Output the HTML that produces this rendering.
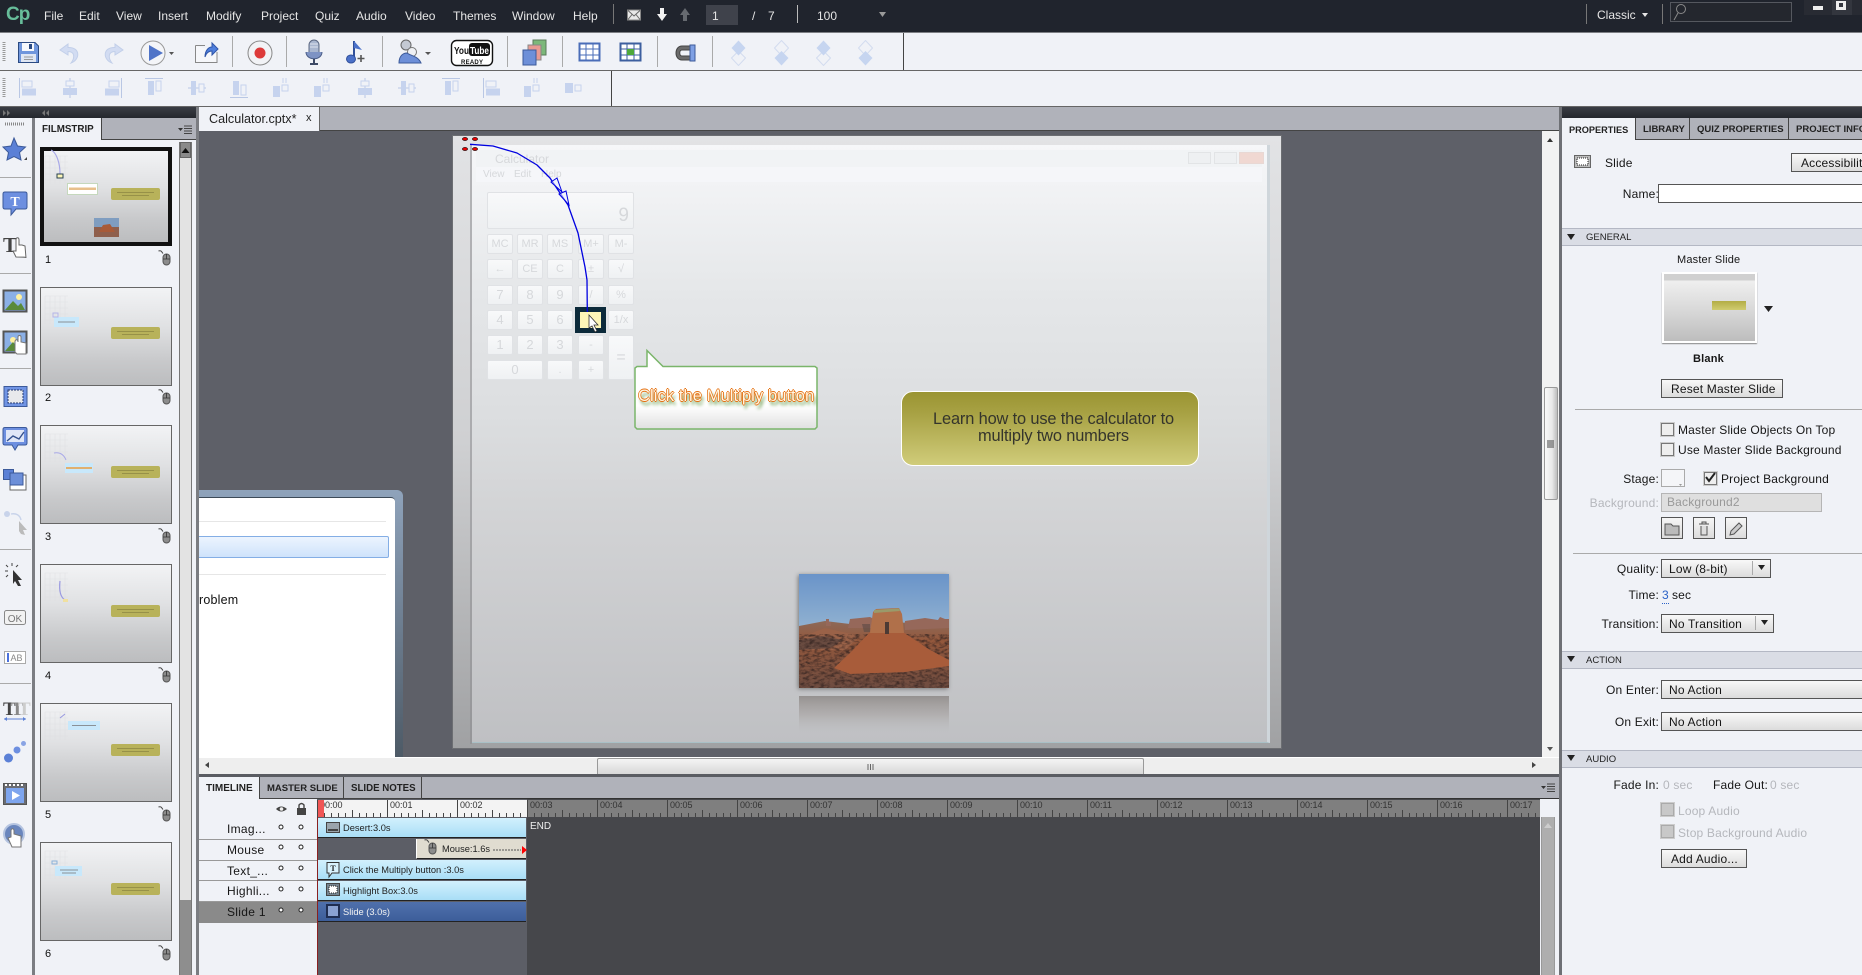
<!DOCTYPE html>
<html><head><meta charset="utf-8"><title>Captivate</title>
<style>
html,body{margin:0;padding:0;width:1862px;height:975px;overflow:hidden;background:#f0f2f7;font-family:"Liberation Sans",sans-serif;font-size:12px;color:#111}
.a{position:absolute;box-sizing:border-box}
.t{position:absolute;white-space:nowrap;line-height:14px;height:14px}
.m{color:#e6e6e6;top:9px;font-size:12px}
.tab{position:absolute;box-sizing:border-box;background:#b0b2ba;border-right:1px solid #444;border-bottom:1px solid #444;font-size:9.5px;font-weight:bold;color:#222;padding-left:7px;white-space:nowrap;line-height:24px;height:22px;overflow:hidden}
.tab.on{background:#f0f2f7;border-bottom:none}
.lb{position:absolute;white-space:nowrap;line-height:14px;height:14px;margin-top:1px;right:203px;text-align:right;letter-spacing:.18px;color:#161616}
.p{position:absolute;white-space:nowrap;line-height:14px;height:14px;margin-top:1px;letter-spacing:.18px;color:#161616}
.btn{position:absolute;box-sizing:border-box;border:1px solid #555;background:linear-gradient(#f8f8f8,#dcdcdc);height:19px;line-height:18px;letter-spacing:.18px;white-space:nowrap;color:#161616}
.hd{position:absolute;left:1562px;width:300px;height:18px;box-sizing:border-box;background:#dadde5;border-top:1px solid #b4b8c4;border-bottom:1px solid #b4b8c4;font-size:9.5px;line-height:18px;padding-left:24px;color:#222}
.cb{position:absolute;box-sizing:border-box;width:13px;height:13px;background:#eee;border:1px solid #777;box-shadow:0 0 0 1px #ccc}
.ck{position:absolute;box-sizing:border-box;background:linear-gradient(#f8f9fa,#eff1f3);border:1px solid #e0e2e5;border-radius:2px;color:#d6d8db;text-align:center;line-height:18px;font-size:11px}
.tr{position:absolute;left:318px;width:208px;height:20px;box-sizing:border-box;background:linear-gradient(#d2f0fd,#a9def6);border-bottom:1px solid #222;font-size:9.3px;line-height:21px;padding-left:25px;color:#222;white-space:nowrap}
.tl{position:absolute;left:227px;font-size:12px;line-height:16px;letter-spacing:.3px;color:#161616}
.rl{position:absolute;top:800px;font-size:9px;line-height:11px;color:#333}
.thn{position:absolute;left:45px;font-size:11px;line-height:12px;color:#111}
.fr{position:absolute;left:40px;width:132px;height:99px;box-sizing:border-box;border:1.5px solid #666;background:linear-gradient(#f2f3f5,#e0e1e3 40%,#c8c9cb 75%,#bcbdbf)}
</style></head><body>

<!-- menu bar -->
<div class="a" style="left:0;top:0;width:1862px;height:33px;background:#20242d;border-bottom:1px solid #7d7f84"></div>
<div class="t" style="left:6px;top:4px;font-size:19px;height:24px;line-height:22px;font-weight:bold;color:#67bd9a;letter-spacing:-1px">Cp</div>
<div class="t m" style="left:44px">File</div><div class="t m" style="left:79px">Edit</div><div class="t m" style="left:116px">View</div><div class="t m" style="left:158px">Insert</div><div class="t m" style="left:206px">Modify</div><div class="t m" style="left:261px">Project</div><div class="t m" style="left:315px">Quiz</div><div class="t m" style="left:356px">Audio</div><div class="t m" style="left:405px">Video</div><div class="t m" style="left:453px">Themes</div><div class="t m" style="left:512px">Window</div><div class="t m" style="left:573px">Help</div>
<div class="a" style="left:613px;top:4px;width:1px;height:20px;background:#777"></div>
<div class="a" style="left:706px;top:5px;width:32px;height:20px;background:#3f424b"></div>
<div class="t m" style="left:712px">1</div><div class="t m" style="left:752px">/</div><div class="t m" style="left:768px">7</div>
<div class="a" style="left:797px;top:5px;width:1px;height:18px;background:#bbb"></div>
<div class="t m" style="left:817px">100</div>
<div class="a" style="left:1586px;top:4px;width:1px;height:20px;background:#777"></div>
<div class="t m" style="left:1597px;top:8px">Classic</div>
<div class="a" style="left:1662px;top:4px;width:1px;height:20px;background:#777"></div>
<div class="a" style="left:1670px;top:2px;width:122px;height:20px;border:1px solid #55585f;background:#24272e"></div>

<!-- toolbars -->
<div class="a" style="left:0;top:33px;width:1862px;height:37px;background:#f0f2f7"></div>
<div class="a" style="left:0;top:70px;width:1862px;height:1px;background:#666"></div>
<div class="a" style="left:903px;top:33px;width:1px;height:37px;background:#444"></div>
<div class="a" style="left:0;top:71px;width:1862px;height:35px;background:#f0f2f7"></div>
<div class="a" style="left:611px;top:71px;width:1px;height:36px;background:#444"></div>
<div class="a" style="left:0;top:106px;width:1862px;height:1px;background:#666"></div>

<!-- left tool + film panel -->
<div class="a" style="left:0;top:107px;width:199px;height:11px;background:linear-gradient(#3a3d44,#24272d)"></div>
<div class="a" style="left:0;top:118px;width:32px;height:857px;background:#f0f2f7"></div>
<div class="a" style="left:32px;top:118px;width:3px;height:857px;background:#7b7d82"></div>
<div class="a" style="left:35px;top:118px;width:161px;height:857px;background:#f0f2f7"></div>
<div class="a" style="left:101px;top:118px;width:95px;height:22px;background:#b0b2ba;border-bottom:1px solid #444;border-left:1px solid #444"></div>
<div class="t" style="left:42px;top:123px;font-size:9.8px;font-weight:bold;color:#222">FILMSTRIP</div>
<div class="a" style="left:179px;top:142px;width:13px;height:833px;background:#e3e3e3;border-left:1px solid #777;border-right:1px solid #777"></div>
<div class="a" style="left:180px;top:142px;width:11px;height:16px;background:#8a8a8a;border:1px solid #666"></div>
<div class="a" style="left:180px;top:900px;width:11px;height:75px;background:#8e8e8e"></div>
<div class="a" style="left:196px;top:107px;width:3px;height:868px;background:#7b7d82"></div>
<div class="a" style="left:0;top:177px;width:31px;height:1px;background:#aaa"></div>
<div class="a" style="left:0;top:273px;width:31px;height:1px;background:#aaa"></div>
<div class="a" style="left:0;top:368px;width:31px;height:1px;background:#aaa"></div>
<div class="a" style="left:0;top:549px;width:31px;height:1px;background:#aaa"></div>
<div class="a" style="left:0;top:683px;width:31px;height:1px;background:#aaa"></div>

<!-- thumbnails frames -->
<div class="fr" style="top:147px;border:4px solid #111"></div>
<div class="fr" style="top:287px"></div><div class="fr" style="top:425px"></div><div class="fr" style="top:564px"></div><div class="fr" style="top:703px"></div><div class="fr" style="top:842px"></div>
<div class="thn" style="top:254px">1</div><div class="thn" style="top:392px">2</div><div class="thn" style="top:531px">3</div><div class="thn" style="top:670px">4</div><div class="thn" style="top:809px">5</div><div class="thn" style="top:948px">6</div>

<!-- workspace -->
<div class="a" style="left:199px;top:107px;width:1360px;height:23px;background:#b0b2ba"></div>
<div class="a" style="left:199px;top:130px;width:1360px;height:1px;background:#444"></div>
<div class="a" style="left:199px;top:107px;width:121px;height:24px;background:#f0f2f7;border-right:1px solid #666"></div>
<div class="t" style="left:209px;top:112px;font-size:12.6px;color:#222">Calculator.cptx*</div>
<div class="t" style="left:306px;top:111px;font-size:11px;color:#222">x</div>
<div class="a" style="left:199px;top:131px;width:1343px;height:626px;background:#5e6068"></div>

<!-- background window -->
<div class="a" style="left:199px;top:490px;width:204px;height:267px;background:linear-gradient(#8fa3bb,#7a8ca1 30%,#4d5a66);border-top-right-radius:6px"></div>
<div class="a" style="left:199px;top:497px;width:196px;height:260px;background:#fff;border-top-right-radius:4px;border-top:1px solid #3d4a58"></div>
<div class="a" style="left:199px;top:521px;width:187px;height:1px;background:#e6e6e6"></div>
<div class="a" style="left:199px;top:536px;width:190px;height:22px;background:linear-gradient(#ecf4fe,#cfe3fb);border:1px solid #84aee5;border-left:none;border-radius:0 2px 2px 0"></div>
<div class="a" style="left:199px;top:574px;width:187px;height:1px;background:#e6e6e6"></div>
<div class="t" style="left:199px;top:593px;font-size:12.5px;letter-spacing:.2px;color:#111">roblem</div>

<!-- slide -->
<div class="a" style="left:452px;top:135px;width:830px;height:614px;background:linear-gradient(#e2e3e5,#cfd0d2 50%,#a0a1a3);border:1px solid #6c6e72"></div>
<div class="a" style="left:470px;top:144px;width:2px;height:600px;background:#8c8d90;opacity:.55"></div>
<div class="a" style="left:472px;top:145px;width:798px;height:598px;background:linear-gradient(#f6f7f9,#e5e7e9 25%,#dcdee0 45%,#d3d4d6 60%,#bfc0c3);border-right:3px solid #cfd6db;border-bottom:1px solid #a9c0c6"></div>
<div class="a" style="left:476px;top:150px;width:786px;height:17px;background:#f1f3f5"></div>
<div class="a" style="left:476px;top:167px;width:786px;height:15px;background:#f5f6f9"></div>
<div class="t" style="left:495px;top:152px;font-size:12px;color:#d6d8db">Calculator</div>
<div class="t" style="left:483px;top:168px;font-size:10px;color:#d6d8db">View</div><div class="t" style="left:514px;top:168px;font-size:10px;color:#d6d8db">Edit</div><div class="t" style="left:541px;top:168px;font-size:10px;color:#d6d8db">Help</div>
<div class="a" style="left:1188px;top:152px;width:23px;height:12px;background:#eef0f2;border:1px solid #e2e4e6"></div>
<div class="a" style="left:1214px;top:152px;width:23px;height:12px;background:#eef0f2;border:1px solid #e2e4e6"></div>
<div class="a" style="left:1239px;top:152px;width:25px;height:12px;background:#f0d8d2;border:1px solid #e8d8d4"></div>
<!-- calculator ghost -->
<div class="ck" style="left:487px;top:192px;width:147px;height:37px;text-align:right;padding:12px 4px 0 0;font-size:19px;line-height:22px">9</div>
<div class="ck" style="left:487px;top:234px;width:26px;height:20px">MC</div><div class="ck" style="left:517px;top:234px;width:26px;height:20px">MR</div><div class="ck" style="left:547px;top:234px;width:26px;height:20px">MS</div><div class="ck" style="left:578px;top:234px;width:26px;height:20px">M+</div><div class="ck" style="left:608px;top:234px;width:26px;height:20px">M-</div>
<div class="ck" style="left:487px;top:259px;width:26px;height:20px">←</div><div class="ck" style="left:517px;top:259px;width:26px;height:20px">CE</div><div class="ck" style="left:547px;top:259px;width:26px;height:20px">C</div><div class="ck" style="left:578px;top:259px;width:26px;height:20px">±</div><div class="ck" style="left:608px;top:259px;width:26px;height:20px">√</div>
<div class="ck" style="left:487px;top:285px;width:26px;height:20px;font-size:13px">7</div><div class="ck" style="left:517px;top:285px;width:26px;height:20px;font-size:13px">8</div><div class="ck" style="left:547px;top:285px;width:26px;height:20px;font-size:13px">9</div><div class="ck" style="left:578px;top:285px;width:26px;height:20px">/</div><div class="ck" style="left:608px;top:285px;width:26px;height:20px">%</div>
<div class="ck" style="left:487px;top:310px;width:26px;height:20px;font-size:13px">4</div><div class="ck" style="left:517px;top:310px;width:26px;height:20px;font-size:13px">5</div><div class="ck" style="left:547px;top:310px;width:26px;height:20px;font-size:13px">6</div><div class="ck" style="left:608px;top:310px;width:26px;height:20px">1/x</div>
<div class="ck" style="left:487px;top:335px;width:26px;height:20px;font-size:13px">1</div><div class="ck" style="left:517px;top:335px;width:26px;height:20px;font-size:13px">2</div><div class="ck" style="left:547px;top:335px;width:26px;height:20px;font-size:13px">3</div><div class="ck" style="left:578px;top:335px;width:26px;height:20px">-</div><div class="ck" style="left:608px;top:335px;width:26px;height:45px;line-height:43px;font-size:16px">=</div>
<div class="ck" style="left:487px;top:360px;width:56px;height:20px;font-size:13px">0</div><div class="ck" style="left:547px;top:360px;width:26px;height:20px">.</div><div class="ck" style="left:578px;top:360px;width:26px;height:20px">+</div>
<!-- highlight -->
<div class="a" style="left:575px;top:307px;width:31px;height:26px;background:#0c2a3a"></div>
<div class="a" style="left:580px;top:312px;width:21px;height:16px;background:#fdf6b8"></div>
<!-- gold -->
<div class="a" style="left:901px;top:391px;width:298px;height:75px;border:1px solid #fff;border-radius:12px;background:linear-gradient(#9a9432,#a8a244 30%,#d0cc7a);color:#35352c;font-size:16.4px;line-height:17px;text-align:center;padding:19px 0 0 7px;letter-spacing:-.15px">Learn how to use the calculator to<br>multiply two numbers</div>
<!-- caption text -->
<div class="t" style="left:638px;top:386px;height:20px;line-height:20px;font-size:16.7px;color:#fff6e2;text-shadow:.8px 0 0 #e56f10,-.8px 0 0 #e56f10,0 .8px 0 #e56f10,0 -.8px 0 #e56f10,2px 4px 3px #5f9440;z-index:3">Click the Multiply button</div>

<!-- right scrollbar & h-scrollbar -->
<div class="a" style="left:1542px;top:131px;width:17px;height:626px;background:#f2f2f2"></div>
<div class="a" style="left:1544px;top:387px;width:14px;height:113px;background:linear-gradient(90deg,#fafafa,#e8e8e8 60%,#bdbdbd);border:1px solid #999;border-radius:2px"></div>
<div class="a" style="left:199px;top:757px;width:1360px;height:17px;background:#eeeeee;border-top:1px solid #fff"></div>
<div class="a" style="left:597px;top:758px;width:547px;height:16px;background:linear-gradient(#f4f4f4,#d8d8d8);border:1px solid #999;border-bottom:none;border-radius:2px 2px 0 0"></div>
<div class="a" style="left:199px;top:774px;width:1360px;height:3px;background:#5a5c62"></div>

<!-- timeline -->
<div class="a" style="left:199px;top:777px;width:1360px;height:22px;background:#b0b2ba;border-bottom:1px solid #333"></div>
<div class="tab on" style="left:199px;top:777px;width:61px;padding-left:7px;font-size:10px">TIMELINE</div>
<div class="tab" style="left:260px;top:777px;width:84px;padding-left:7px;font-size:9.5px">MASTER SLIDE</div>
<div class="tab" style="left:344px;top:777px;width:78px;padding-left:7px;font-size:9.7px">SLIDE NOTES</div>
<div class="a" style="left:199px;top:799px;width:118px;height:176px;background:#f0f2f7"></div>
<div class="a" style="left:317px;top:799px;width:210px;height:176px;background:#5c5e66"></div>
<div class="a" style="left:527px;top:799px;width:1013px;height:176px;background:#46474b"></div>
<div class="a" style="left:1540px;top:799px;width:19px;height:176px;background:#f0f2f7"></div>
<div class="a" style="left:1541px;top:817px;width:14px;height:158px;background:#aeaeae;border-left:1px solid #999;border-right:1px solid #999"></div>
<div class="a" style="left:317px;top:800px;width:210px;height:17px;background:#f3f3f3"></div>
<div class="a" style="left:527px;top:800px;width:1013px;height:17px;background:#7f7f7f"></div>
<div class="a" style="left:199px;top:839px;width:118px;height:1px;background:#999"></div>
<div class="a" style="left:199px;top:860px;width:118px;height:1px;background:#999"></div>
<div class="a" style="left:199px;top:880px;width:118px;height:1px;background:#999"></div>
<div class="a" style="left:199px;top:901px;width:118px;height:1px;background:#999"></div>
<div class="a" style="left:199px;top:902px;width:118px;height:21px;background:#8a8a8a"></div>
<div class="tl" style="top:821px">Imag...</div><div class="tl" style="top:842px">Mouse</div><div class="tl" style="top:863px">Text_...</div><div class="tl" style="top:883px">Highli...</div><div class="tl" style="top:904px">Slide 1</div>
<div class="tr" style="top:818px">Desert:3.0s</div>
<div class="a" style="left:416px;top:839px;width:110px;height:20px;background:#e0dcd0;border-left:1px solid #fff;border-bottom:1px solid #222;font-size:9.3px;line-height:21px;padding-left:25px;color:#222">Mouse:1.6s</div>
<div class="tr" style="top:860px">Click the Multiply button :3.0s</div>
<div class="tr" style="top:881px">Highlight Box:3.0s</div>
<div class="tr" style="top:902px;background:linear-gradient(#4f70ac,#3d5e9a);color:#f2f2f2">Slide (3.0s)</div>
<div class="t" style="left:530px;top:820px;font-size:10px;color:#eee">END</div>
<div class="rl" style="left:320px">00:00</div><div class="rl" style="left:390px">00:01</div><div class="rl" style="left:460px">00:02</div>
<div class="rl" style="left:530px">00:03</div><div class="rl" style="left:600px">00:04</div><div class="rl" style="left:670px">00:05</div><div class="rl" style="left:740px">00:06</div><div class="rl" style="left:810px">00:07</div><div class="rl" style="left:880px">00:08</div><div class="rl" style="left:950px">00:09</div><div class="rl" style="left:1020px">00:10</div><div class="rl" style="left:1090px">00:11</div><div class="rl" style="left:1160px">00:12</div><div class="rl" style="left:1230px">00:13</div><div class="rl" style="left:1300px">00:14</div><div class="rl" style="left:1370px">00:15</div><div class="rl" style="left:1440px">00:16</div><div class="rl" style="left:1510px">00:17</div>

<!-- right panel -->
<div class="a" style="left:1559px;top:107px;width:3px;height:868px;background:#6e7075"></div>
<div class="a" style="left:1562px;top:107px;width:300px;height:868px;background:#f0f2f7"></div>
<div class="a" style="left:1562px;top:107px;width:300px;height:11px;background:linear-gradient(#3a3d44,#24272d)"></div>
<div class="a" style="left:1562px;top:118px;width:300px;height:22px;background:#b0b2ba"></div>
<div class="tab on" style="left:1562px;top:118px;width:74px;font-size:9.2px">PROPERTIES</div>
<div class="tab" style="left:1636px;top:118px;width:54px">LIBRARY</div>
<div class="tab" style="left:1690px;top:118px;width:99px">QUIZ PROPERTIES</div>
<div class="tab" style="left:1789px;top:118px;width:73px;border-right:none">PROJECT INFO</div>
<div class="p" style="left:1605px;top:155px">Slide</div>
<div class="btn" style="left:1791px;top:153px;width:80px;padding-left:9px">Accessibility</div>
<div class="lb" style="top:186px">Name:</div>
<div class="a" style="left:1658px;top:184px;width:210px;height:19px;background:#fff;border:1px solid #555"></div>
<div class="hd" style="top:228px">GENERAL</div>
<div class="p" style="left:1677px;top:252px;font-size:11px">Master Slide</div>
<div class="a" style="left:1662px;top:272px;width:95px;height:71px;border:2px solid #fff;background:linear-gradient(#d0d0d0 0,#d0d0d0 6px,#efefef 7px,#d8d8d8 55%,#bdbdbd);box-shadow:0 1px 1px #888"></div>
<div class="a" style="left:1712px;top:301px;width:34px;height:9px;background:linear-gradient(#b3ad45,#d0cc70)"></div>
<div class="p" style="left:1693px;top:351px;font-weight:bold;font-size:11px;letter-spacing:.2px">Blank</div>
<div class="btn" style="left:1661px;top:379px;width:122px;padding-left:9px">Reset Master Slide</div>
<div class="a" style="left:1575px;top:409px;width:287px;height:1px;background:#aaa"></div>
<div class="cb" style="left:1661px;top:423px"></div><div class="p" style="left:1678px;top:422px">Master Slide Objects On Top</div>
<div class="cb" style="left:1661px;top:443px"></div><div class="p" style="left:1678px;top:442px">Use Master Slide Background</div>
<div class="lb" style="top:471px">Stage:</div>
<div class="a" style="left:1661px;top:469px;width:24px;height:18px;background:#f4f5f8;border:1px solid #aaa"></div>
<div class="cb" style="left:1704px;top:472px"></div><div class="p" style="left:1721px;top:471px">Project Background</div>
<div class="lb" style="top:495px;color:#b5b7bc">Background:</div>
<div class="a" style="left:1661px;top:493px;width:161px;height:19px;background:#dfdfdf;border:1px solid #b5b5b5;padding-left:5px;line-height:16px;color:#999;letter-spacing:.18px">Background2</div>
<div class="a" style="left:1661px;top:517px;width:22px;height:22px;border:1px solid #555;background:linear-gradient(#f6f6f6,#dcdcdc)"></div>
<div class="a" style="left:1693px;top:517px;width:22px;height:22px;border:1px solid #555;background:linear-gradient(#f6f6f6,#dcdcdc)"></div>
<div class="a" style="left:1725px;top:517px;width:22px;height:22px;border:1px solid #555;background:linear-gradient(#f6f6f6,#dcdcdc)"></div>
<div class="a" style="left:1573px;top:553px;width:289px;height:1px;background:#aaa"></div>
<div class="lb" style="top:561px">Quality:</div>
<div class="btn" style="left:1661px;top:559px;width:110px;padding-left:7px">Low (8-bit)</div>
<div class="lb" style="top:587px">Time:</div>
<div class="p" style="left:1662px;top:587px;color:#2a62c8;border-bottom:1px dotted #2a62c8;height:15px">3</div><div class="p" style="left:1672px;top:587px">sec</div>
<div class="lb" style="top:616px">Transition:</div>
<div class="btn" style="left:1661px;top:614px;width:113px;padding-left:7px">No Transition</div>
<div class="hd" style="top:651px">ACTION</div>
<div class="lb" style="top:682px">On Enter:</div>
<div class="btn" style="left:1661px;top:680px;width:210px;padding-left:7px">No Action</div>
<div class="lb" style="top:714px">On Exit:</div>
<div class="btn" style="left:1661px;top:712px;width:210px;padding-left:7px">No Action</div>
<div class="hd" style="top:750px">AUDIO</div>
<div class="lb" style="top:777px">Fade In:</div>
<div class="p" style="left:1663px;top:777px;color:#b5b7bc">0 sec</div>
<div class="lb" style="top:777px;right:94px">Fade Out:</div>
<div class="p" style="left:1770px;top:777px;color:#b5b7bc">0 sec</div>
<div class="cb" style="left:1661px;top:803px;background:#c8c8c8;border-color:#aaa"></div><div class="p" style="left:1678px;top:803px;color:#b5b7bc">Loop Audio</div>
<div class="cb" style="left:1661px;top:825px;background:#c8c8c8;border-color:#aaa"></div><div class="p" style="left:1678px;top:825px;color:#b5b7bc">Stop Background Audio</div>
<div class="btn" style="left:1661px;top:849px;width:86px;padding-left:9px">Add Audio...</div>

<!-- vector layer -->
<svg class="a" style="left:0;top:0;z-index:2;pointer-events:none" width="1862" height="975" viewBox="0 0 1862 975" xmlns="http://www.w3.org/2000/svg">
<defs>
<linearGradient id="sky" x1="0" y1="0" x2="0" y2="1"><stop offset="0" stop-color="#6a94c9"/><stop offset=".45" stop-color="#8fb0d0"/><stop offset="1" stop-color="#b4bec6"/></linearGradient>
<linearGradient id="gnd" x1="0" y1="0" x2="0" y2="1"><stop offset="0" stop-color="#8c6a5a"/><stop offset=".3" stop-color="#94583c"/><stop offset="1" stop-color="#6e4c40"/></linearGradient>
<linearGradient id="rf" x1="0" y1="0" x2="0" y2="1"><stop offset="0" stop-color="#8a8582" stop-opacity=".8"/><stop offset=".5" stop-color="#a09a98" stop-opacity=".5"/><stop offset="1" stop-color="#b5b6b8" stop-opacity="0"/></linearGradient>
<linearGradient id="capb" x1="0" y1="0" x2="0" y2="1"><stop offset="0" stop-color="#fff"/><stop offset=".7" stop-color="#fff"/><stop offset="1" stop-color="#e0e0e0"/></linearGradient>
<pattern id="tk" x="317" y="800" width="70" height="17" patternUnits="userSpaceOnUse"><path d="M.5 0V17M7.5 13V17M14.5 13V17M21.5 13V17M28.5 13V17M35.5 10V17M42.5 13V17M49.5 13V17M56.5 13V17M63.5 13V17" stroke="#444" fill="none"/></pattern>
<filter id="spk" x="0" y="0" width="100%" height="100%" color-interpolation-filters="sRGB"><feTurbulence type="fractalNoise" baseFrequency=".2 .4" numOctaves="3" seed="4"/><feColorMatrix values="0 0 0 0 .2  0 0 0 0 .14  0 0 0 0 .13  2.6 0 0 0 -1.05"/><feComposite in2="SourceGraphic" operator="in"/></filter>
<symbol id="ms" viewBox="0 0 13 16" width="13" height="16"><path d="M.5 1C3 0 3.5 1.5 5 3.5" fill="none" stroke="#444"/><rect x="5" y="4" width="7" height="11" rx="3.5" fill="#8c8c8c" stroke="#555"/><path d="M8.5 4V9M5 9H12" stroke="#333" stroke-width=".8"/></symbol>
<symbol id="gold" viewBox="0 0 49 12" width="49" height="12"><rect width="49" height="12" rx="2" fill="#b8b25a"/><path d="M6 4.500H43M11 7.500H38" stroke="#979148" stroke-width="1"/></symbol>
<symbol id="ghost" viewBox="0 0 25 30" width="25" height="30"><path d="M1 1H24M1 7H24M1 13H24M1 19H24M1 25H24M1 1V29M6 1V29M11 1V29M16 1V29M21 1V29" stroke="#dcdde0" stroke-width=".6" fill="none"/></symbol>
<symbol id="aL" viewBox="0 0 18 20" width="18" height="20"><path d="M.5 0V20" stroke="#b9c7e4"/><rect x="3" y="3" width="10" height="6" fill="none" stroke="#c6d3ee"/><rect x="3" y="10.500" width="14" height="7" fill="#c6d3ee"/></symbol>
<symbol id="aC" viewBox="0 0 18 20" width="18" height="20"><path d="M9 0V20" stroke="#b9c7e4"/><rect x="5" y="3" width="8" height="5" fill="#f0f2f7" stroke="#c6d3ee"/><rect x="2" y="10" width="14" height="7" fill="#c6d3ee"/></symbol>
<symbol id="aR" viewBox="0 0 18 20" width="18" height="20"><path d="M17.500 0V20" stroke="#b9c7e4"/><rect x="5" y="3" width="10" height="6" fill="none" stroke="#c6d3ee"/><rect x="1" y="10.500" width="14" height="7" fill="#c6d3ee"/></symbol>
<symbol id="aT" viewBox="0 0 18 20" width="18" height="20"><path d="M0 .5H18" stroke="#b9c7e4"/><rect x="3" y="3" width="6" height="14" fill="#c6d3ee"/><rect x="11" y="3" width="5" height="10" fill="none" stroke="#c6d3ee"/></symbol>
<symbol id="aM" viewBox="0 0 18 20" width="18" height="20"><path d="M0 10H18" stroke="#b9c7e4"/><rect x="3" y="3" width="5" height="14" fill="#c6d3ee"/><rect x="11" y="6" width="5" height="8" fill="#f0f2f7" stroke="#c6d3ee"/></symbol>
<symbol id="aB" viewBox="0 0 18 20" width="18" height="20"><path d="M0 19.500H18" stroke="#b9c7e4"/><rect x="3" y="3" width="6" height="14" fill="#c6d3ee"/><rect x="11" y="7" width="5" height="10" fill="none" stroke="#c6d3ee"/></symbol>
<symbol id="aS" viewBox="0 0 18 20" width="18" height="20"><rect x="1" y="8" width="7" height="11" fill="#c6d3ee"/><rect x="10" y="7" width="6" height="6" fill="none" stroke="#c6d3ee"/><path d="M11 0V5M14 0V5" stroke="#c6d3ee"/></symbol>
<symbol id="dia" viewBox="0 0 15 26" width="15" height="26"><path d="M7.500 11L14.500 18L7.500 25.500L.5 18Z" fill="#f0f2f7" stroke="#d3dcef"/><path d="M7.500 .5L14.500 8L7.500 15.500L.5 8Z" fill="#c6d5f0"/></symbol>
<symbol id="dia2" viewBox="0 0 15 26" width="15" height="26"><path d="M7.500 .5L14.500 8L7.500 15.500L.5 8Z" fill="#f0f2f7" stroke="#d3dcef"/><path d="M7.500 11L14.500 18L7.500 25.500L.5 18Z" fill="#c6d5f0"/></symbol>
</defs>

<!-- menu icons -->
<rect x="627.500" y="10" width="13" height="10" fill="#e8e8e8" stroke="#888"/><path d="M628 10.500L634 16L640 10.500M628 19.500L632 14.500M640 19.500L636 14.500" stroke="#666" fill="none"/>
<path d="M660 8H664V14H667L662 21L657 14H660Z" fill="#f2f2f2"/>
<path d="M683 21H687V15H690L685 8L680 15H683Z" fill="#666a70"/>
<path d="M879 12H886L882.500 17Z" fill="#9a9a9a"/>
<path d="M1642 13H1648L1645 17Z" fill="#e6e6e6"/>
<circle cx="1681" cy="9" r="4.500" fill="none" stroke="#8a8a8a"/><path d="M1678 13L1674 20" stroke="#8a8a8a"/>
<rect x="1804" y="0" width="28" height="15" fill="#282b33"/><rect x="1813" y="6" width="10" height="4" fill="#eee"/>
<rect x="1832" y="0" width="20" height="15" fill="#33363e"/><rect x="1836" y="1" width="10" height="9" fill="#eee"/><rect x="1839" y="3" width="4" height="4" fill="#33363e"/>
<rect x="1852" y="0" width="10" height="15" fill="#282b33"/>

<!-- toolbar grips -->
<path d="M4 42V62M4 78V97" stroke="#999" stroke-width="3" stroke-dasharray="1 1"/>
<path d="M232.500 36V67M286.500 36V67M382.500 36V67M507.500 36V67M562.500 36V67M657.500 36V67M712.500 36V67" stroke="#aaa" fill="none"/>
<!-- save -->
<path d="M18.500 42.500H35L38.500 46V62.500H18.500Z" fill="#7096dc" stroke="#2b4a82"/><rect x="22" y="43" width="12" height="8" fill="#f6f8fc"/><rect x="29" y="44" width="3" height="5" fill="#2b4a82"/><rect x="21" y="54" width="15" height="8" fill="#dfe6f3"/><path d="M24 57H33M24 59.500H33" stroke="#999"/>
<!-- undo/redo -->
<path d="M68 44L60 50L68 55V51.500C75 51.500 75 58 71 63C80 60 81 47 68 47.500Z" fill="#d2dcf2" stroke="#c2cfe9"/>
<path d="M115 44L123 50L115 55V51.500C108 51.500 108 58 112 63C103 60 102 47 115 47.500Z" fill="#d2dcf2" stroke="#c2cfe9"/>
<!-- play -->
<circle cx="153" cy="53" r="12" fill="#f4f5f8" stroke="#999"/><path d="M149 45L163 53L149 61Z" fill="#5074c8"/><path d="M169 52H174L171.500 55Z" fill="#555"/>
<!-- publish -->
<path d="M195.500 45.500H205M217 52V62.500H195.500V45.500" fill="#f6f7fa" stroke="#888"/><path d="M205 57C205 50 209 47 212 47V43L218 49L212 55V51C209 51 206 53 205 57Z" fill="#4f7fdc" stroke="#2f55a8"/>
<!-- record -->
<circle cx="260" cy="53" r="12" fill="#f2f3f6" stroke="#888"/><circle cx="260" cy="53" r="5.500" fill="#dd3a3a"/>
<!-- mic -->
<rect x="309" y="40" width="10" height="17" rx="5" fill="#a9b6cf" stroke="#5c6882"/><path d="M310 44H318M310 47H318" stroke="#dde3ee"/><path d="M306 52C306 61 322 61 322 52" fill="#7e93c4" stroke="#4c5e88"/><path d="M314 59V64M310 64H318" stroke="#3d4a66" stroke-width="2"/>
<!-- note -->
<path d="M354 41L354 58" stroke="#2f4f9a" stroke-width="2"/><path d="M354 41L362 50L354 48Z" fill="#4a70c8"/><ellipse cx="351" cy="59" rx="4.500" ry="4" fill="#4a70c8" stroke="#2f4f9a"/><path d="M361 55V62M357.500 58.500H364.500" stroke="#555" stroke-width="1.600"/>
<!-- actor -->
<circle cx="406" cy="45" r="5" fill="#c4c9d3" stroke="#666"/><circle cx="412" cy="52" r="4.500" fill="#eef0f4" stroke="#777"/><path d="M399 63C399 55 404 53 407 53C411 56 418 56 421 63Z" fill="#6d8fd8" stroke="#3c5a9a"/><path d="M425 52H431L428 55Z" fill="#555"/>
<!-- youtube -->
<rect x="451.500" y="40.500" width="41" height="25" rx="5" fill="#fff" stroke="#111" stroke-width="1.400"/><rect x="469" y="43" width="21" height="13" rx="3" fill="#111"/>
<text x="454" y="54" font-family="Liberation Sans,sans-serif" font-weight="bold" font-size="10" fill="#111" textLength="15" lengthAdjust="spacingAndGlyphs">You</text>
<text x="470" y="54" font-family="Liberation Sans,sans-serif" font-weight="bold" font-size="10" fill="#fff" textLength="19" lengthAdjust="spacingAndGlyphs">Tube</text>
<text x="461" y="64" font-family="Liberation Sans,sans-serif" font-weight="bold" font-size="6" fill="#111" textLength="22" lengthAdjust="spacing">READY</text>
<!-- stack -->
<rect x="533" y="40" width="13" height="15" fill="#7cb87a" stroke="#5a7a5a"/><rect x="528" y="45" width="13" height="15" fill="#e89a92" stroke="#888"/><rect x="523" y="50" width="13" height="15" fill="#6d8fd8" stroke="#3c5a9a"/>
<!-- grids -->
<rect x="579.500" y="43.500" width="20" height="17" fill="#fff" stroke="#4a6db8" stroke-width="2"/><path d="M586 44V60M593 44V60M580 49H599M580 55H599" stroke="#4a6db8"/>
<rect x="620.500" y="43.500" width="20" height="17" fill="#fff" stroke="#3d5f9f" stroke-width="2"/><path d="M627 44V60M634 44V60M621 49H640M621 55H640" stroke="#3d5f9f"/><rect x="627" y="49" width="7" height="6" fill="#4ea83a"/>
<!-- magnet -->
<path d="M690 46H682C674 46 674 60 682 60H690V56H682C679 56 679 50 682 50H690Z" fill="#6b6b6b" stroke="#444"/><rect x="690" y="45" width="5" height="16" fill="#7fa0e4" stroke="#3c5a9a"/>
<!-- layers -->
<use href="#dia" x="731" y="40"/><use href="#dia2" x="774" y="40"/><use href="#dia" x="816" y="40"/><use href="#dia2" x="858" y="40"/>
<!-- align row -->
<use href="#aL" x="19" y="78"/><use href="#aC" x="61" y="78"/><use href="#aR" x="104" y="78"/><use href="#aT" x="145" y="78"/><use href="#aM" x="188" y="78"/><use href="#aB" x="230" y="78"/><use href="#aS" x="272" y="78"/><use href="#aS" x="313" y="78"/><use href="#aC" x="356" y="78"/><use href="#aM" x="398" y="78"/><use href="#aT" x="442" y="78"/><use href="#aL" x="483" y="78"/><use href="#aS" x="523" y="78"/><rect x="565" y="83" width="8" height="10" fill="#c6d3ee"/><rect x="575" y="85" width="6" height="6" fill="none" stroke="#c6d3ee"/>

<!-- strip arrows -->
<path d="M3 110L6 113L3 116ZM7 110L10 113L7 116ZM45 110L42 113L45 116ZM49 110L46 113L49 116Z" fill="#777"/>
<path d="M5 124H25" stroke="#888" stroke-width="3" stroke-dasharray="1 1"/>
<path d="M178 128H183L180.500 131Z" fill="#333"/><path d="M184 126H192M184 128.500H192M184 131H192M184 133.500H192" stroke="#444"/>
<path d="M181.500 153L185.500 148L189.500 153Z" fill="#111"/>

<!-- tool icons -->
<path d="M14 138L17.500 146L25.500 147L19.500 152.500L21 160L14 156.500L7 160L8.500 152.500L3 147L11 146Z" fill="#5b80d6" stroke="#3c5a9a"/><path d="M24 160H27V157Z" fill="#444"/>
<path d="M5 192H25Q27 192 27 194V207Q27 209 25 209H16L11 215V209H5Q3 209 3 207V194Q3 192 5 192Z" fill="#6d8fe0" stroke="#3c5a9a"/><text x="15" y="206" text-anchor="middle" font-family="Liberation Serif,serif" font-weight="bold" font-size="14" fill="#fff">T</text>
<text x="3" y="252" font-family="Liberation Serif,serif" font-weight="bold" font-size="21" fill="#444">T</text><path d="M16 251V240C16 237 19 237 19 240V245L22 245L25 246L26 258C26 257 24 257 16 257L13 251Z" fill="#fff" stroke="#666"/>
<rect x="3.500" y="290.500" width="23" height="21" fill="#8bb0e6" stroke="#555" stroke-width="2"/><circle cx="19" cy="297" r="3" fill="#fff1a0"/><path d="M5 310L13 301L18 306L21 303L25 310Z" fill="#5a8a3a"/>
<rect x="3.500" y="331.500" width="23" height="21" fill="#8bb0e6" stroke="#555" stroke-width="2"/><circle cx="13" cy="340" r="3" fill="#fff1a0"/><path d="M5 351L13 342L20 351Z" fill="#5a8a3a"/><path d="M15 352V342C15 339 18 339 18 342V337C18 335 21 335 21 337V342L26 343V354H17Z" fill="#fff" stroke="#777"/>
<rect x="4" y="386.500" width="23" height="20" fill="#7094e4" stroke="#3c5a9a"/><rect x="8" y="390" width="15" height="13" fill="#e8e9ec" stroke="#23396e" stroke-dasharray="2 1"/>
<path d="M5 427.500H25Q27 427.500 27 429.500V443Q27 445 25 445H18L15 450L12 445H5Q3 445 3 443V429.500Q3 427.500 5 427.500Z" fill="#6d8fe0" stroke="#3c5a9a"/><rect x="6" y="430" width="18" height="12" fill="#dfe6f7"/><path d="M7 441L13 436L19 439L24 432" stroke="#34518e" fill="none" stroke-width="1.400"/>
<rect x="3.500" y="469.500" width="10" height="10" fill="#5b80d6" stroke="#3c5a9a"/><rect x="10" y="475" width="16" height="15" fill="#fff" stroke="#666"/><rect x="10" y="473" width="13" height="12" fill="#6d8fd8" stroke="#3c5a9a"/>
<circle cx="7" cy="514" r="3" fill="#c8d3ea"/><path d="M11 514C16 513 20 515 21 520" stroke="#c8d3ea" fill="none" stroke-width="1.400"/><path d="M19 521L27 530L23 530L25 535L21 534L19 531Z" fill="#bbb"/>
<path d="M13 570L22 580L18 580L21 586L18 586L15 581L13 584Z" fill="#333"/><path d="M12 566V563M8 571H5M8 567L6 565M16 567L18 565M8 575L6 577" stroke="#444"/>
<rect x="4.500" y="610.500" width="21" height="14" rx="2" fill="#f2f2f2" stroke="#888"/><text x="15" y="622" text-anchor="middle" font-family="Liberation Sans,sans-serif" font-size="10" fill="#777">OK</text>
<rect x="4.500" y="651.500" width="21" height="12" fill="#fff" stroke="#aaa"/><rect x="7" y="653" width="2" height="9" fill="#4a70dc"/><text x="10.500" y="661" font-family="Liberation Sans,sans-serif" font-size="9" fill="#888">AB</text>
<text x="3" y="715" font-family="Liberation Serif,serif" font-weight="bold" font-size="19" fill="#444">T</text><text x="11" y="715" font-family="Liberation Serif,serif" font-weight="bold" font-size="19" fill="#888">T</text><text x="18" y="715" font-family="Liberation Serif,serif" font-weight="bold" font-size="19" fill="#ccc">T</text><path d="M4 719H26" stroke="#5b80d6"/><path d="M4 719L7 717V721ZM26 719L23 717V721Z" fill="#5b80d6"/>
<circle cx="8.500" cy="758" r="4.500" fill="#5b80d6"/><circle cx="17" cy="750" r="3.500" fill="#6d8fe0"/><circle cx="23.500" cy="743.500" r="2.500" fill="#8aa4e4"/>
<rect x="3.500" y="783.500" width="23" height="21" fill="#6a6c72" stroke="#555"/><path d="M5 785H25" stroke="#fff" stroke-width="2" stroke-dasharray="2 2"/><rect x="6" y="788" width="18" height="15" fill="#7ea5ee"/><path d="M12 791L20 795.500L12 800Z" fill="#fff"/>
<circle cx="14" cy="834" r="10" fill="#6a86bd" stroke="#b5c4e0" stroke-width="2"/><path d="M12 847L8 838L11 837V831C11 828 14 828 14 831V834L21 836V847Z" fill="#fff" stroke="#777"/>

<!-- thumb contents -->
<g>
<use href="#ghost" x="44" y="155" opacity=".7"/><use href="#gold" x="111" y="188"/>
<path d="M51 150C56 152 60 162 60 174" stroke="#a9a9e8" fill="none" stroke-width="1.200"/><rect x="57" y="174" width="6" height="4" fill="#fdf6b8" stroke="#264050"/>
<rect x="67.500" y="183.500" width="30" height="11" fill="#fff" stroke="#c5d8bd"/><rect x="69" y="187.500" width="27" height="2.500" fill="#e8c08c"/>
<rect x="94" y="218" width="25" height="19" fill="#8f5f4c"/><rect x="94" y="218" width="25" height="9" fill="#7f9dc0"/><path d="M103 225L110 224L115 232H99Z" fill="#a85a38"/>
<use href="#ghost" x="44" y="295" opacity=".7"/><use href="#gold" x="111" y="327"/>
<rect x="54" y="317" width="25" height="10" fill="#c8e8fb"/><path d="M58 322H75" stroke="#8a9096"/><rect x="53" y="313" width="5" height="4" fill="none" stroke="#b5b5e8"/>
<use href="#ghost" x="44" y="433" opacity=".7"/><use href="#gold" x="111" y="466"/>
<rect x="65" y="463" width="28" height="10" fill="#c8e8fb"/><rect x="66" y="467" width="26" height="2" fill="#e0b070"/><path d="M54 453C60 452 64 455 66 460" stroke="#a9a9e8" fill="none"/>
<use href="#ghost" x="44" y="572" opacity=".7"/><use href="#gold" x="111" y="605"/>
<path d="M60 581C59 590 60 597 65 600" stroke="#9898e0" fill="none" stroke-width="1.200"/><rect x="63" y="599" width="5" height="3" fill="#f0e0a0"/>
<use href="#ghost" x="44" y="711" opacity=".7"/><use href="#gold" x="111" y="744"/>
<rect x="68" y="721" width="32" height="9" fill="#c8e8fb"/><path d="M72 725.500H96" stroke="#8a9096"/><path d="M60 718L65 714" stroke="#9898e0"/>
<use href="#ghost" x="44" y="850" opacity=".7"/><use href="#gold" x="111" y="883"/>
<rect x="55" y="866" width="27" height="10" fill="#c8e8fb"/><path d="M60 870H78M62 873H76" stroke="#8a9096"/><rect x="52" y="861" width="5" height="3" fill="none" stroke="#8ab0d8"/>
<use href="#ms" x="158" y="250"/><use href="#ms" x="158" y="389"/><use href="#ms" x="158" y="528"/><use href="#ms" x="158" y="667"/><use href="#ms" x="158" y="806"/><use href="#ms" x="158" y="945"/>
</g>

<!-- blue motion path -->
<path d="M470 144.300L493 146L517 153L537 165L550 178L568 205L578 233L585 267L587 280L587.300 312" fill="none" stroke="#0000e0" stroke-width="1.300" stroke-linejoin="round"/>
<path d="M551 182L557 178L562 192ZM559 194L566 191L569 205Z" fill="#eef0ff" fill-opacity=".55" stroke="#0000e0" stroke-width="1"/>
<ellipse cx="465" cy="139" rx="2.500" ry="1.500" fill="#e00" stroke="#300" stroke-width=".8"/><ellipse cx="475" cy="139" rx="2.500" ry="1.500" fill="#e00" stroke="#300" stroke-width=".8"/><ellipse cx="465" cy="149" rx="2.500" ry="1.500" fill="#e00" stroke="#300" stroke-width=".8"/><ellipse cx="475" cy="149" rx="2.500" ry="1.500" fill="#e00" stroke="#300" stroke-width=".8"/>
<path d="M589 315V328L592 326L595 332L597 331L594 325H598Z" fill="#fff" stroke="#333" stroke-width=".8"/>
<!-- caption bubble -->
<path d="M637 366.500H647V350.500L663 366.500H815L817 368V427L815 429H637L635 427V368Z" fill="url(#capb)" stroke="#7ab56a" stroke-width="1.500"/>
<!-- desert -->
<rect x="799" y="574" width="150" height="114" fill="url(#sky)" style="filter:drop-shadow(-1px 1px 2px #777)"/>
<path d="M799 626L825 621L850 624L880 624L949 620V688H799Z" fill="url(#gnd)"/>
<path d="M826 619H829V622H831V626H826ZM850 619L870 617L880 622V628H848ZM905 621L925 618L938 620L940 617L945 619L949 619V628L905 630Z" fill="#96685a"/>
<path d="M799 638L825 628L860 636L845 650L799 650Z" fill="#9a6248"/>
<path d="M799 640L822 636L843 640L830 648L799 650Z" fill="#4a3c3c" opacity=".6"/>
<path d="M799 634H949V688H799Z" fill="#000" filter="url(#spk)" opacity=".8"/>
<path d="M834 668L850 653L870 632H903L930 650L949 660V666L905 672L850 674Z" fill="#a85c3a"/>
<path d="M873 612L876 609L899 608L902 614L904 633H870Z" fill="#b0704a"/>
<path d="M874 610L899 608.500L900 611L874 613Z" fill="#9a9a6a"/>
<path d="M885 622H889V634H885Z" fill="#4c3a34"/><path d="M862 624H870V632H864Z" fill="#5a4a44" opacity=".6"/>
<rect x="799" y="696" width="150" height="37" fill="url(#rf)"/>

<!-- scroll arrows -->
<path d="M1547 142L1553 142L1550 138Z" fill="#333"/><path d="M1547 747H1553L1550 751Z" fill="#555"/>
<path d="M1547 441H1554M1547 443H1554M1547 445H1554M1547 447H1554" stroke="#444"/>
<path d="M868 764V770M870.500 764V770M873 764V770" stroke="#666"/>
<path d="M209 762V768L205 765Z" fill="#444"/><path d="M1532 762V768L1536 765Z" fill="#444"/>
<path d="M1541 786H1546L1543.500 789Z" fill="#333"/><path d="M1547 784H1555M1547 786.500H1555M1547 789H1555M1547 791.500H1555" stroke="#444"/>
<path d="M1544 828L1548 823L1552 828Z" fill="#ccc"/>

<!-- ruler -->
<rect x="317" y="800" width="1223" height="17" fill="url(#tk)"/>
<rect x="318" y="800" width="6" height="17" fill="#f05656"/>
<path d="M317.500 817V975" stroke="#8a2020"/>
<!-- eye lock -->
<path d="M276 809Q281 804 287 809Q281 814 276 809Z" fill="#444"/><circle cx="281.500" cy="809" r="1.800" fill="#eee"/>
<rect x="297" y="808" width="9" height="7" fill="#444"/><path d="M299 808V805Q301.500 802 304 805V808" fill="none" stroke="#444" stroke-width="1.400"/>
<g fill="#fff" stroke="#222">
<circle cx="281" cy="827" r="2"/><circle cx="301" cy="827" r="2"/><circle cx="281" cy="847" r="2"/><circle cx="301" cy="847" r="2"/><circle cx="281" cy="868" r="2"/><circle cx="301" cy="868" r="2"/><circle cx="281" cy="889" r="2"/><circle cx="301" cy="889" r="2"/><circle cx="281" cy="910" r="2"/><circle cx="301" cy="910" r="2"/>
</g>
<!-- track icons -->
<rect x="326.500" y="822.500" width="13" height="10" fill="#9aa4ac" stroke="#444"/><rect x="328" y="829" width="10" height="2" fill="#444"/>
<use href="#ms" x="424" y="839"/>
<path d="M493 850H521" stroke="#555" stroke-dasharray="2 1"/><path d="M522 846L527 850L522 854Z" fill="#f00"/>
<path d="M327 862.500H339V873H332L329 877V873H327Z" fill="#d8f2fd" stroke="#333"/><text x="333" y="871" text-anchor="middle" font-family="Liberation Serif,serif" font-weight="bold" font-size="8" fill="#222">T</text>
<rect x="326.500" y="883.500" width="13" height="12" fill="#75848f" stroke="#444"/><rect x="329" y="886" width="8" height="7" fill="#fff" stroke="#222" stroke-dasharray="1 1"/>
<rect x="326" y="904" width="14" height="14" fill="#1f2e52"/><rect x="328" y="906" width="10" height="10" fill="#8aa2d2"/>

<!-- props icons -->
<rect x="1574.500" y="155.500" width="16" height="12" fill="#bbb" stroke="#666"/><rect x="1577" y="158" width="11" height="7" fill="#fff" stroke="#222" stroke-dasharray="1 1"/>
<g fill="#222"><path d="M1567 234H1575L1571 240Z"/><path d="M1567 656H1575L1571 662Z"/><path d="M1567 755H1575L1571 761Z"/><path d="M1764 306H1773L1768.500 312Z"/><path d="M1758 565H1765L1761.500 570Z"/><path d="M1761 620H1768L1764.500 625Z"/></g>
<path d="M1752.500 561V575M1755.500 616V630" stroke="#aaa"/>
<path d="M1706 477L1709 481L1715 473" stroke="#222" stroke-width="2" fill="none"/>
<path d="M1679 484L1682 484L1680.500 486Z" fill="#999"/>
<path d="M1665 524H1671L1673 526H1679V535H1665Z" fill="#bbb" stroke="#555"/>
<path d="M1699 524H1709M1701 526V535H1707V526M1702 524V522H1706V524" fill="#ddd" stroke="#555"/>
<path d="M1730 535L1731 531L1739 523L1742 526L1734 534Z" fill="#ccc" stroke="#555"/>
</svg>
</body></html>
